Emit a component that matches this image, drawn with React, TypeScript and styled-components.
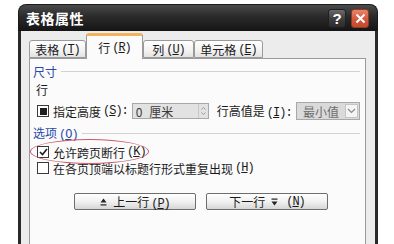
import React from 'react'
import styled, { createGlobalStyle } from 'styled-components'

const GlobalStyle = createGlobalStyle`
  html, body {
    margin: 0;
    padding: 0;
    background: #ffffff;
  }
  body {
    width: 394px;
    height: 244px;
    overflow: hidden;
    font-family: 'Noto Sans CJK SC', 'Liberation Sans', sans-serif;
    font-size: 12px;
    color: #1a1a1a;
  }
`

const Window = styled.div`
  margin: 4px 0 0 18px;
  width: 360px;
  height: 250px;
  display: flex;
  flex-direction: column;
`

const TitleBar = styled.div`
  height: 27px;
  flex: none;
  display: flex;
  align-items: center;
  padding: 0 8px 0 7px;
  border-radius: 8px 8px 0 0;
  background: linear-gradient(#4a4a4a, #2a2a2a 45%, #151515);
  border: 1px solid #1a1a1a;
  border-bottom: none;
  box-sizing: border-box;
`

const Title = styled.div`
  flex: 1;
  color: #ffffff;
  font-size: 14px;
  font-weight: 700;
  letter-spacing: 0.5px;
  line-height: 27px;
`

const CaptionButton = styled.div<{ $close?: boolean }>`
  width: 18px;
  height: 19px;
  margin-left: 5px;
  border-radius: 3px;
  display: flex;
  align-items: center;
  justify-content: center;
  box-sizing: border-box;
  border: 1px solid ${({ $close }) => ($close ? '#8a3a26' : '#202020')};
  background: ${({ $close }) =>
    $close
      ? 'linear-gradient(#e9846a, #d4573a 55%, #c14a2e)'
      : 'linear-gradient(#6a6a6a, #3c3c3c 55%, #2c2c2c)'};
  color: #ffffff;
  font-family: 'Liberation Sans', sans-serif;
  font-weight: 700;
  font-size: 15px;
`

const Body = styled.div`
  flex: 1;
  background: #ececec;
  border-left: 3px solid #2a2a2a;
  border-right: 3px solid #2a2a2a;
  padding: 2px 9px 0 8px;
  display: flex;
  flex-direction: column;
`

const TabStrip = styled.div`
  display: flex;
  align-items: flex-end;
  height: 25px;
  flex: none;
  position: relative;
  z-index: 1;
`

const Tab = styled.div<{ $w: number; $active?: boolean }>`
  width: ${({ $w }) => $w}px;
  height: ${({ $active }) => ($active ? 26 : 18)}px;
  box-sizing: border-box;
  display: flex;
  align-items: center;
  justify-content: center;
  border: 1px solid #9a9a9a;
  border-bottom: ${({ $active }) => ($active ? 'none' : '1px solid #9a9a9a')};
  border-top: ${({ $active }) => ($active ? '3px solid #f2b35a' : '1px solid #9a9a9a')};
  border-radius: 3px 3px 0 0;
  background: ${({ $active }) =>
    $active ? '#fbfbfb' : 'linear-gradient(#ffffff, #f2f2f2 60%, #e2e2e2)'};
  font-size: 12px;
  padding-top: ${({ $active }) => ($active ? 0 : 1)}px;
  margin-bottom: ${({ $active }) => ($active ? -1 : 0)}px;
`

const Panel = styled.div`
  flex: 1;
  background: #fbfbfb;
  border: 1px solid #9a9a9a;
  padding: 0 5px 0 3px;
  display: flex;
  flex-direction: column;
`

const SectionHead = styled.div<{ $top: number }>`
  display: flex;
  align-items: center;
  height: 16px;
  margin-top: ${({ $top }) => $top}px;
  color: #2a49a8;
  gap: 4px;

  &::after {
    content: '';
    flex: 1;
    height: 1px;
    background: #d2d2d2;
  }
`

const PlainLabel = styled.div`
  height: 16px;
  line-height: 16px;
  margin-top: 3px;
  padding-left: 3px;
`

const Row = styled.div<{ $top: number; $h?: number }>`
  display: flex;
  align-items: center;
  height: ${({ $h }) => $h ?? 16}px;
  margin-top: ${({ $top }) => $top}px;
  padding-left: 4px;
  position: relative;
  white-space: nowrap;
`

const Box = styled.span<{ $mode?: 'filled' | 'checked' }>`
  width: 12px;
  height: 12px;
  flex: none;
  box-sizing: border-box;
  border: 1px solid #3a3a3a;
  background: #ffffff;
  margin-right: 4px;
  display: flex;
  align-items: center;
  justify-content: center;

  &::before {
    content: '';
    display: ${({ $mode }) => ($mode === 'filled' ? 'block' : 'none')};
    width: 7px;
    height: 7px;
    background: #1e1e1e;
  }
`

const Key = styled.span`
  text-decoration: underline;
`

const Mn = styled.span`
  font-family: 'Liberation Mono', monospace;
  font-size: 12px;
  letter-spacing: -1px;
  margin-left: 2px;
`

const FieldLabel = styled.span<{ $gap: number }>`
  margin-left: ${({ $gap }) => $gap}px;
`

const Field = styled.div<{ $w: number; $gap: number }>`
  width: ${({ $w }) => $w}px;
  height: 16px;
  box-sizing: border-box;
  margin-left: ${({ $gap }) => $gap}px;
  border: 1px solid #a8a8a8;
  background: #e2e2e2;
  display: flex;
  align-items: center;
  padding-left: 3px;
  color: #3a3a3a;
  word-spacing: 4px;
`

const FieldText = styled.span`
  flex: 1;
`

const Spin = styled.div`
  width: 9px;
  height: 14px;
  border-left: 1px solid #c8c8c8;
  display: flex;
  flex-direction: column;
  align-items: center;
  justify-content: center;
  gap: 2px;
`

const SelectBox = styled(Field)`
  height: 18px;
  margin-left: auto;
  color: #6c6c6c;
  background: #dadada;
  padding-left: 6px;
  word-spacing: 0;
`

const Drop = styled.div`
  width: 13px;
  height: 14px;
  margin-right: 1px;
  box-sizing: border-box;
  border: 1px solid #c4c4c4;
  background: #f4f4f4;
  display: flex;
  align-items: center;
  justify-content: center;
`

const Ring = styled.div`
  position: absolute;
  left: -3px;
  top: -5px;
  width: 119px;
  height: 25px;
  box-sizing: border-box;
  border: 1.5px solid #c95a68;
  border-radius: 50%;
  pointer-events: none;
`

const ButtonRow = styled.div`
  display: flex;
  gap: 10px;
  margin-top: 17px;
  padding-left: 41px;
`

const PushButton = styled.div`
  width: 122px;
  height: 17px;
  box-sizing: border-box;
  border: 1px solid #6e6e6e;
  border-radius: 2px;
  background: linear-gradient(#ffffff, #f1f1f1 50%, #d6d6d6);
  display: flex;
  align-items: center;
  justify-content: center;
  gap: 6px;
  font-size: 12px;
`

const StepIcon = ({ down }: { down?: boolean }) => (
  <svg width="7" height="8" viewBox="0 0 7 8">
    {down ? (
      <>
        <rect x="0.5" y="0.5" width="6" height="1.2" fill="#222" />
        <path d="M0.5 3.5 H6.5 L3.5 7.5 Z" fill="#222" />
      </>
    ) : (
      <>
        <path d="M3.5 0.5 L6.5 4.5 H0.5 Z" fill="#222" />
        <rect x="0.5" y="6.3" width="6" height="1.2" fill="#222" />
      </>
    )}
  </svg>
)

const Caret = ({ up }: { up?: boolean }) => (
  <svg width="5" height="3" viewBox="0 0 5 3">
    <path d={up ? 'M0.5 2.5 L2.5 0.5 L4.5 2.5' : 'M0.5 0.5 L2.5 2.5 L4.5 0.5'} stroke="#9a9a9a" fill="none" />
  </svg>
)

const Tick = () => (
  <svg width="9" height="8" viewBox="0 0 9 8">
    <path d="M1 4 L3.5 6.5 L8 1" stroke="#1c1c1c" strokeWidth="1.6" fill="none" />
  </svg>
)

const Chevron = () => (
  <svg width="9" height="6" viewBox="0 0 9 6">
    <path d="M1 1 L4.5 4.5 L8 1" stroke="#8a8a8a" strokeWidth="1.2" fill="none" />
  </svg>
)

const CloseGlyph = () => (
  <svg width="11" height="11" viewBox="0 0 11 11">
    <path d="M1.5 1.5 L9.5 9.5 M9.5 1.5 L1.5 9.5" stroke="#ffffff" strokeWidth="2" />
  </svg>
)

export default function App() {
  return (
    <>
      <GlobalStyle />
      <Window>
        <TitleBar>
          <Title>表格属性</Title>
          <CaptionButton>?</CaptionButton>
          <CaptionButton $close>
            <CloseGlyph />
          </CaptionButton>
        </TitleBar>
        <Body>
          <TabStrip>
            <Tab $w={57}>表格<Mn>(<Key>T</Key>)</Mn></Tab>
            <Tab $w={57} $active>行<Mn>(<Key>R</Key>)</Mn></Tab>
            <Tab $w={51}>列<Mn>(<Key>U</Key>)</Mn></Tab>
            <Tab $w={69}>单元格<Mn>(<Key>E</Key>)</Mn></Tab>
          </TabStrip>
          <Panel>
            <SectionHead $top={4}>尺寸</SectionHead>
            <PlainLabel>行</PlainLabel>
            <Row $top={4} $h={18}>
              <Box $mode="filled" />
              指定高度<Mn>(<Key>S</Key>):</Mn>
              <Field $w={77} $gap={4}>
                <FieldText>0 厘米</FieldText>
                <Spin>
                  <Caret up />
                  <Caret />
                </Spin>
              </Field>
              <FieldLabel $gap={8}>
                行高值是<Mn>(<Key>I</Key>):</Mn>
              </FieldLabel>
              <SelectBox $w={64} $gap={0}>
                <FieldText>最小值</FieldText>
                <Drop>
                  <Chevron />
                </Drop>
              </SelectBox>
            </Row>
            <SectionHead $top={5}>
              <span>
                选项<Mn>(<Key>O</Key>)</Mn>
              </span>
            </SectionHead>
            <Row $top={3}>
              <Box $mode="checked">
                <Tick />
              </Box>
              允许跨页断行<Mn>(<Key>K</Key>)</Mn>
              <Ring />
            </Row>
            <Row $top={0}>
              <Box />
              在各页顶端以标题行形式重复出现<Mn>(<Key>H</Key>)</Mn>
            </Row>
            <ButtonRow>
              <PushButton>
                <StepIcon />
                <span>
                  上一行<Mn>(<Key>P</Key>)</Mn>
                </span>
              </PushButton>
              <PushButton>
                <span>下一行</span>
                <StepIcon down />
                <Mn>(<Key>N</Key>)</Mn>
              </PushButton>
            </ButtonRow>
          </Panel>
        </Body>
      </Window>
    </>
  )
}
